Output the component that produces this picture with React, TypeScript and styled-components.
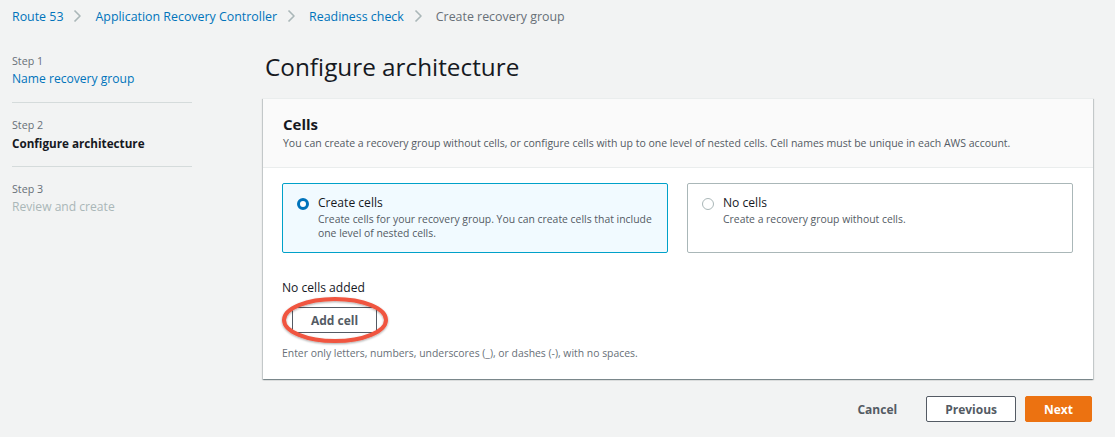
import React from "react";
import styled, { createGlobalStyle } from "styled-components";

const GlobalStyle = createGlobalStyle`
  html, body { margin: 0; padding: 0; }
  body {
    background: #f2f3f3;
    font-family: "Open Sans", "Noto Sans", Arial, sans-serif;
    color: #16191f;
    -webkit-font-smoothing: antialiased;
  }
  * { box-sizing: border-box; }
`;

const Shell = styled.div`
  width: 1115px;
  min-height: 437px;
  display: flex;
  flex-direction: column;
`;

const Breadcrumbs = styled.nav`
  height: 32px;
  padding-left: 12px;
  display: flex;
  align-items: center;
  font-size: 12.4px;
`;

const Crumb = styled.a<{ $current?: boolean }>`
  color: ${(p) => (p.$current ? "#687078" : "#0073bb")};
  text-decoration: none;
  white-space: nowrap;
`;

const ChevronWrap = styled.span`
  display: inline-flex;
  margin: 0 10px 0 6px;
  color: #aab7b8;
`;

const Layout = styled.div`
  display: grid;
  grid-template-columns: 180px 830px;
  column-gap: 71px;
  padding-left: 12px;
`;

const Steps = styled.ol`
  list-style: none;
  margin: 0;
  padding: 21px 0 0;
`;

const StepItem = styled.li<{ $last?: boolean }>`
  padding: ${(p) => (p.$last ? "14px 0 0" : "14px 0 13px")};
  border-bottom: ${(p) => (p.$last ? "none" : "1px solid #d5dbdb")};
  &:first-child { padding-top: 0; }
`;

const StepLabel = styled.div`
  font-size: 10.7px;
  line-height: 16px;
  color: #687078;
`;

const StepTitle = styled.div<{ $state: "link" | "active" | "disabled" }>`
  font-size: ${(p) => (p.$state === "active" ? "11.7px" : "12.1px")};
  line-height: 20px;
  font-weight: ${(p) => (p.$state === "active" ? 700 : 400)};
  color: ${(p) =>
    p.$state === "link" ? "#0073bb" : p.$state === "active" ? "#16191f" : "#aab7b8"};
`;

const Main = styled.main`
  padding-top: 20px;
  display: flex;
  flex-direction: column;
`;

const PageTitle = styled.h1`
  margin: 0 0 16px;
  padding-left: 2px;
  font-size: 24.3px;
  line-height: 30px;
  font-weight: 400;
  color: #16191f;
`;

const Container = styled.section`
  background: #ffffff;
  box-shadow: 0 1px 1px 0 rgba(0, 28, 36, 0.3), 1px 1px 1px 0 rgba(0, 28, 36, 0.15),
    -1px 1px 1px 0 rgba(0, 28, 36, 0.15);
  border-top: 1px solid #eaeded;
`;

const ContainerHeader = styled.header`
  background: #fafafa;
  border-bottom: 1px solid #eaeded;
  padding: 14px 20px 16px;
`;

const HeaderTitle = styled.h2`
  margin: 0;
  font-size: 15px;
  line-height: 22px;
  font-weight: 700;
`;

const HeaderDesc = styled.p`
  margin: 0;
  font-size: 10.5px;
  line-height: 16px;
  color: #545b64;
`;

const ContainerBody = styled.div`
  padding: 15px 20px 19px 19px;
`;

const BodyColumn = styled.div`
  display: flex;
  flex-direction: column;
`;

const Tiles = styled.div`
  display: grid;
  grid-template-columns: 386px 386px;
  column-gap: 19px;
`;

const Tile = styled.label<{ $selected?: boolean }>`
  display: flex;
  align-items: flex-start;
  gap: 9px;
  height: 70px;
  padding: 10px 8px 0 14px;
  border: 1px solid ${(p) => (p.$selected ? "#00a1c9" : "#aab7b8")};
  background: ${(p) => (p.$selected ? "#f1faff" : "#ffffff")};
  border-radius: 2px;
  cursor: pointer;
`;

const Radio = styled.span<{ $checked?: boolean }>`
  flex: none;
  width: 12px;
  height: 12px;
  margin-top: 4px;
  border-radius: 50%;
  background: #ffffff;
  border: ${(p) => (p.$checked ? "3.5px solid #0073bb" : "1px solid #aab7b8")};
`;

const TileText = styled.div`
  display: flex;
  flex-direction: column;
`;

const TileTitle = styled.span`
  font-size: 12.1px;
  line-height: 18px;
  color: #16191f;
`;

const TileDesc = styled.span`
  font-size: 10.4px;
  line-height: 14px;
  color: #545b64;
`;

const EmptyLabel = styled.div`
  margin-top: 27px;
  font-size: 12.1px;
  line-height: 16px;
`;

const AddWrap = styled.div`
  position: relative;
  align-self: flex-start;
  margin: 11px 0 0 10px;
  display: inline-flex;
`;

const Button = styled.button<{ $variant?: "normal" | "primary" | "link" }>`
  font-family: inherit;
  font-size: 12px;
  font-weight: 700;
  height: 26px;
  padding: 0 ${(p) => (p.$variant === "link" ? "0" : "18px")};
  border-radius: 2px;
  cursor: pointer;
  border: 1px solid
    ${(p) =>
      p.$variant === "primary" ? "#ec7211" : p.$variant === "link" ? "transparent" : "#545b64"};
  background: ${(p) =>
    p.$variant === "primary" ? "#ec7211" : p.$variant === "link" ? "transparent" : "#ffffff"};
  color: ${(p) => (p.$variant === "primary" ? "#ffffff" : "#545b64")};
`;

const Highlight = styled.svg`
  position: absolute;
  left: -11px;
  top: -11px;
  pointer-events: none;
  overflow: visible;
`;

const HelpText = styled.div`
  margin-top: 13px;
  font-size: 10.4px;
  line-height: 14px;
  color: #687078;
`;

const Footer = styled.div`
  display: flex;
  justify-content: flex-end;
  align-items: center;
  margin-top: 17px;
  margin-right: 1px;
  gap: 9px;
`;

const CancelButton = styled(Button)`
  margin-right: 19px;
  padding: 0;
`;

const Chevron = () => (
  <ChevronWrap>
    <svg width="16" height="16" viewBox="0 0 16 16" fill="none">
      <path d="M5.5 2.5 L11 8 L5.5 13.5" stroke="currentColor" strokeWidth="1.6" strokeLinejoin="round" />
    </svg>
  </ChevronWrap>
);

export default function App() {
  return (
    <Shell>
      <GlobalStyle />
      <Breadcrumbs>
        <Crumb href="#">Route 53</Crumb>
        <Chevron />
        <Crumb href="#">Application Recovery Controller</Crumb>
        <Chevron />
        <Crumb href="#">Readiness check</Crumb>
        <Chevron />
        <Crumb $current>Create recovery group</Crumb>
      </Breadcrumbs>
      <Layout>
        <Steps>
          <StepItem>
            <StepLabel>Step 1</StepLabel>
            <StepTitle $state="link">Name recovery group</StepTitle>
          </StepItem>
          <StepItem>
            <StepLabel>Step 2</StepLabel>
            <StepTitle $state="active">Configure architecture</StepTitle>
          </StepItem>
          <StepItem $last>
            <StepLabel>Step 3</StepLabel>
            <StepTitle $state="disabled">Review and create</StepTitle>
          </StepItem>
        </Steps>
        <Main>
          <PageTitle>Configure architecture</PageTitle>
          <Container>
            <ContainerHeader>
              <HeaderTitle>Cells</HeaderTitle>
              <HeaderDesc>
                You can create a recovery group without cells, or configure cells with up to one level of nested
                cells. Cell names must be unique in each AWS account.
              </HeaderDesc>
            </ContainerHeader>
            <ContainerBody>
              <BodyColumn>
                <Tiles>
                  <Tile $selected>
                    <Radio $checked />
                    <TileText>
                      <TileTitle>Create cells</TileTitle>
                      <TileDesc>
                        Create cells for your recovery group. You can create cells that include one level of nested
                        cells.
                      </TileDesc>
                    </TileText>
                  </Tile>
                  <Tile>
                    <Radio />
                    <TileText>
                      <TileTitle>No cells</TileTitle>
                      <TileDesc>Create a recovery group without cells.</TileDesc>
                    </TileText>
                  </Tile>
                </Tiles>
                <EmptyLabel>No cells added</EmptyLabel>
                <AddWrap>
                  <Button>Add cell</Button>
                  <Highlight width="110" height="50" viewBox="0 0 110 50">
                    <defs>
                      <filter id="sh" x="-20%" y="-30%" width="140%" height="160%">
                        <feDropShadow dx="0" dy="1" stdDeviation="1.2" floodColor="#000" floodOpacity="0.35" />
                      </filter>
                    </defs>
                    <ellipse cx="54" cy="24" rx="51" ry="21" fill="none" stroke="#f0553f" strokeWidth="4" filter="url(#sh)" />
                  </Highlight>
                </AddWrap>
                <HelpText>Enter only letters, numbers, underscores (_), or dashes (-), with no spaces.</HelpText>
              </BodyColumn>
            </ContainerBody>
          </Container>
          <Footer>
            <CancelButton $variant="link">Cancel</CancelButton>
            <Button>Previous</Button>
            <Button $variant="primary">Next</Button>
          </Footer>
        </Main>
      </Layout>
    </Shell>
  );
}
